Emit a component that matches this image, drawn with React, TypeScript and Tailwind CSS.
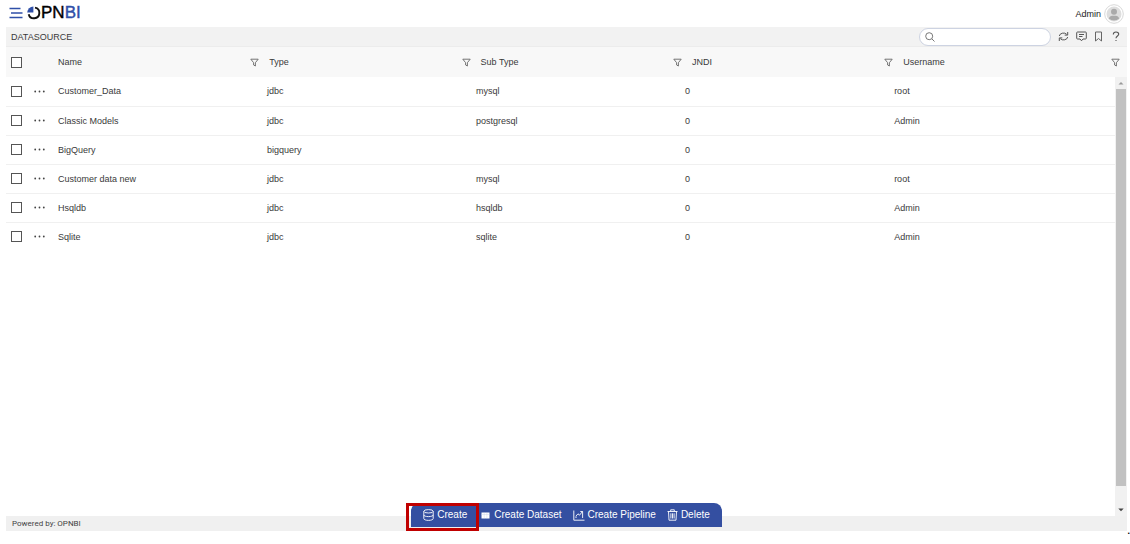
import React from 'react';

interface DataSource {
  name: string;
  type: string;
  subType: string;
  jndi: string;
  username: string;
}

const columns = ['Name', 'Type', 'Sub Type', 'JNDI', 'Username'];

const dataSources: DataSource[] = [
  { name: 'Customer_Data', type: 'jdbc', subType: 'mysql', jndi: '0', username: 'root' },
  { name: 'Classic Models', type: 'jdbc', subType: 'postgresql', jndi: '0', username: 'Admin' },
  { name: 'BigQuery', type: 'bigquery', subType: '', jndi: '0', username: '' },
  { name: 'Customer data new', type: 'jdbc', subType: 'mysql', jndi: '0', username: 'root' },
  { name: 'Hsqldb', type: 'jdbc', subType: 'hsqldb', jndi: '0', username: 'Admin' },
  { name: 'Sqlite', type: 'jdbc', subType: 'sqlite', jndi: '0', username: 'Admin' },
];

const Logo: React.FC = () => (
  <a href="#" aria-label="OPNBI" className="flex items-center text-[17px] leading-[20px] text-black">
    <svg width="14" height="14" viewBox="0 0 14 14" fill="none">
      <path d="M6.4 0.6v6H0.2A6.3 6.3 0 0 1 6.4 0.6z" fill="#2f4fa8" />
      <path d="M8 1.6a5.4 5.4 0 1 1-6.300 6.600" stroke="#111" strokeWidth="1.900" />
    </svg>
    <span className="[-webkit-text-stroke:0.4px]">
      PN<span className="text-[#2f4fa8]">BI</span>
    </span>
  </a>
);

const FilterIcon: React.FC = () => (
  <svg width="9" height="9" viewBox="0 0 9 9" fill="none" stroke="#666" strokeWidth="0.9" strokeLinejoin="round">
    <path d="M0.8 1.2h7.4L5.4 4.700v3.300L3.600 7V4.700z" />
  </svg>
);

const RefreshIcon: React.FC = () => (
  <svg width="11" height="11" viewBox="0 0 11 11" fill="none" stroke="#555" strokeWidth="1">
    <path d="M1.300 5A4.200 3.400 0 0 1 8.700 3.300M9.700 6A4.200 3.400 0 0 1 2.300 7.700" />
    <path d="M9.700 1v3.100H6.700M1.300 10V6.900h3" />
  </svg>
);

const CommentIcon: React.FC = () => (
  <svg width="11" height="11" viewBox="0 0 11 11" fill="none" stroke="#555" strokeWidth="1">
    <path d="M1.5 1h8a0.8 0.8 0 0 1 .8.8v5.4a0.8 0.8 0 0 1-.8.8H7L5.5 9.8 4 8H1.5a0.8 0.8 0 0 1-.8-.8V1.8A0.8 0.8 0 0 1 1.5 1z" />
    <path d="M3 3.500h5M3 5.500h3.500" />
  </svg>
);

const BookmarkIcon: React.FC = () => (
  <svg width="9" height="11" viewBox="0 0 9 11" fill="none" stroke="#666" strokeWidth="1">
    <path d="M1.500 1h6v9L4.500 7.500 1.500 10z" />
  </svg>
);

const HelpIcon: React.FC = () => (
  <svg width="8" height="11" viewBox="0 0 8 11" fill="none" stroke="#555" strokeWidth="1.100">
    <path d="M1.300 3.500C1.300 1.900 2.500 1 4 1s2.700.9 2.700 2.300C6.700 5 4 5.100 4 7.300" />
    <path d="M4 8.900v1.200" />
  </svg>
);

const DatabaseIcon: React.FC = () => (
  <svg width="11" height="12" viewBox="0 0 11 12" fill="none" stroke="#fff" strokeWidth="0.9">
    <ellipse cx="5.500" cy="2.300" rx="4.700" ry="1.700" />
    <path d="M0.800 2.300v7.300c0 1 2.100 1.800 4.700 1.800s4.700-.8 4.700-1.800V2.300" />
    <path d="M0.800 5.900c0 1 2.100 1.700 4.700 1.700s4.700-.7 4.700-1.700" />
  </svg>
);

const DatasetIcon: React.FC = () => (
  <svg width="9" height="7" viewBox="0 0 9 7">
    <rect x="0.500" y="0.500" width="8" height="6" fill="#fff" />
    <path d="M0.500 2.500h8M3.200 0.500v6M5.900 0.500v6" stroke="#c3cce6" strokeWidth="0.400" />
  </svg>
);

const PipelineIcon: React.FC = () => (
  <svg width="12" height="11" viewBox="0 0 12 11" fill="none" stroke="#fff" strokeWidth="0.900">
    <path d="M0.800 0.500v9.700H11.500" />
    <path d="M3 8V6.300M3 6l2-2.200 1.500 1.400L9.500 1.500M7.300 1.500h2.300V8" />
  </svg>
);

const TrashIcon: React.FC = () => (
  <svg width="11" height="12" viewBox="0 0 11 12" fill="none" stroke="#fff" strokeWidth="0.900">
    <path d="M0.500 2.500h10M3.700 2.300V0.800h3.600v1.500M1.500 2.500l.5 8.700h7l.5-8.700" />
    <path d="M3.900 4.300v5.200M5.500 4.300v5.200M7.100 4.300v5.200" />
  </svg>
);

const Checkbox: React.FC<{ label: string }> = ({ label }) => (
  <input
    type="checkbox"
    aria-label={label}
    className="block size-[11px] appearance-none border border-[#555] bg-white checked:bg-[#2f4fa8]"
  />
);

const ColumnWidths: React.FC = () => (
  <colgroup>
    <col className="w-[22px]" />
    <col className="w-[23px]" />
    <col className="w-[18.85%]" />
    <col className="w-[18.85%]" />
    <col className="w-[18.85%]" />
    <col className="w-[18.85%]" />
    <col />
  </colgroup>
);

const TopBar: React.FC = () => (
  <header className="flex h-[27px] items-center justify-between px-[3px]">
    <div className="flex items-center gap-1 pb-[2px]">
      <button aria-label="Menu" className="block">
        <svg width="14" height="12" viewBox="0 0 14 12" stroke="#2f4fa8" strokeWidth="1.600">
          <path d="M0.500 1.500h11M2 6h11.500M0.500 10.500H13.500" />
        </svg>
      </button>
      <Logo />
    </div>
    <div className="flex items-center gap-[3px]">
      <span className="text-[#222]">Admin</span>
      <svg width="20" height="20" viewBox="0 0 20 20">
        <circle cx="10" cy="10" r="9.300" fill="#fff" stroke="#d8d8d8" />
        <circle cx="10" cy="10" r="7.500" fill="#dedede" />
        <circle cx="10" cy="7.800" r="3" fill="#aaa" />
        <path d="M4.800 14.500c.5-2.300 2.300-2.800 5.200-2.800s4.700.5 5.200 2.800a7.500 7.500 0 0 1-10.400 0z" fill="#aaa" />
      </svg>
    </div>
  </header>
);

const TitleBar: React.FC = () => (
  <div className="flex h-5 items-center justify-between border-b border-[#ececec] bg-[#f2f2f2] pr-[7px] pl-[5px]">
    <h1>DATASOURCE</h1>
    <div className="flex items-center gap-[7px]">
      <label className="flex h-[18px] w-[132px] items-center rounded-full border border-[#cdd3e2] bg-white px-[5px]">
        <svg width="10" height="10" viewBox="0 0 10 10" fill="none" stroke="#777" className="shrink-0">
          <circle cx="4.200" cy="4.200" r="3.500" />
          <path d="M6.800 6.800L9.500 9.500" />
        </svg>
        <input type="text" aria-label="Search" className="min-w-0 flex-1 bg-transparent pl-1 outline-none" />
      </label>
      <button aria-label="Refresh"><RefreshIcon /></button>
      <button aria-label="Comments"><CommentIcon /></button>
      <button aria-label="Bookmark"><BookmarkIcon /></button>
      <button aria-label="Help" className="pl-[2px]"><HelpIcon /></button>
    </div>
  </div>
);

const DataSourceGrid: React.FC = () => (
  <main className="flex min-h-0 flex-1 flex-col">
    <table className="w-full shrink-0 table-fixed bg-[#f8f8f8] text-left">
      <ColumnWidths />
      <thead>
        <tr className="h-[30px]">
          <th className="pl-[5px]"><Checkbox label="Select all" /></th>
          <th></th>
          {columns.map((column) => (
            <th key={column} scope="col" className="pr-[3px] pl-[7px] font-normal last:pr-[7px]">
              <div className="flex items-center justify-between">
                {column}
                <button aria-label={`Filter ${column}`}><FilterIcon /></button>
              </div>
            </th>
          ))}
        </tr>
      </thead>
    </table>

    <div className="flex min-h-0 flex-1">
      <div className="min-w-0 flex-1 overflow-hidden">
        <table className="w-full table-fixed text-left">
          <ColumnWidths />
          <tbody>
            {dataSources.map((source) => (
              <tr key={source.name} className="h-[29px] border-b border-[#f0f0f0] last:border-b-0">
                <td className="pl-[5px]"><Checkbox label={`Select ${source.name}`} /></td>
                <td className="pl-[6px]">
                  <button aria-label={`Actions for ${source.name}`} className="block">
                    <svg width="11" height="3" viewBox="0 0 11 3" fill="#444">
                      <circle cx="1.200" cy="1.500" r="0.900" />
                      <circle cx="5.500" cy="1.500" r="0.900" />
                      <circle cx="9.800" cy="1.500" r="0.900" />
                    </svg>
                  </button>
                </td>
                <td className="px-[7px]">{source.name}</td>
                <td className="px-[7px]">{source.type}</td>
                <td className="px-[7px]">{source.subType}</td>
                <td className="px-[7px]">{source.jndi}</td>
                <td className="px-[7px]">{source.username}</td>
              </tr>
            ))}
          </tbody>
        </table>
      </div>

      <div className="flex w-3 flex-col items-center bg-[#f1f1f1]">
        <svg width="12" height="12" viewBox="0 0 12 12" fill="#999"><path d="M3.500 7.500L6 5l2.500 2.500z" /></svg>
        <div className="w-[10px] flex-1 bg-[#c1c1c1]"></div>
        <svg width="12" height="30" viewBox="0 0 12 30" fill="#444"><path d="M3.300 22.500L6 25.300l2.700-2.800z" /></svg>
      </div>
    </div>
  </main>
);

const ActionBar: React.FC = () => (
  <div className="absolute inset-x-0 bottom-0 flex justify-center">
    <div className="relative mb-1 flex h-6 items-center rounded-t-lg bg-[#344fa1] px-3 text-[10px] text-white">
      <button className="flex items-center gap-[3px]"><DatabaseIcon /> Create</button>
      <button className="ml-[14px] flex items-center gap-1"><DatasetIcon /> Create Dataset</button>
      <button className="ml-[11px] flex items-center gap-[3px]"><PipelineIcon /> Create Pipeline</button>
      <button className="ml-[11px] flex items-center gap-[3px]"><TrashIcon /> Delete</button>
      <div className="pointer-events-none absolute top-0 -left-[5px] h-7 w-[73px] border-3 border-[#c00000]"></div>
    </div>
  </div>
);

const App: React.FC = () => {
  return (
    <div className="flex h-screen flex-col bg-white pr-[3px] pl-[6px] font-['Liberation_Sans',Arial,sans-serif] text-[9px] leading-[12px] text-[#3a3a3a]">
      <TopBar />
      <TitleBar />
      <DataSourceGrid />
      <footer className="relative flex h-[15px] shrink-0 items-center bg-[#f0f0f0] px-[6px] font-[Roboto,sans-serif] text-[8px] text-[#444]">
        Powered by: OPNBI
        <div className="font-['Liberation_Sans',Arial,sans-serif]">
          <ActionBar />
        </div>
      </footer>
      <div className="-mr-[3px] h-[13px] shrink-0 text-right leading-none font-bold text-black">
        <span className="block -mt-1">.</span>
      </div>
    </div>
  );
};

export default App;
